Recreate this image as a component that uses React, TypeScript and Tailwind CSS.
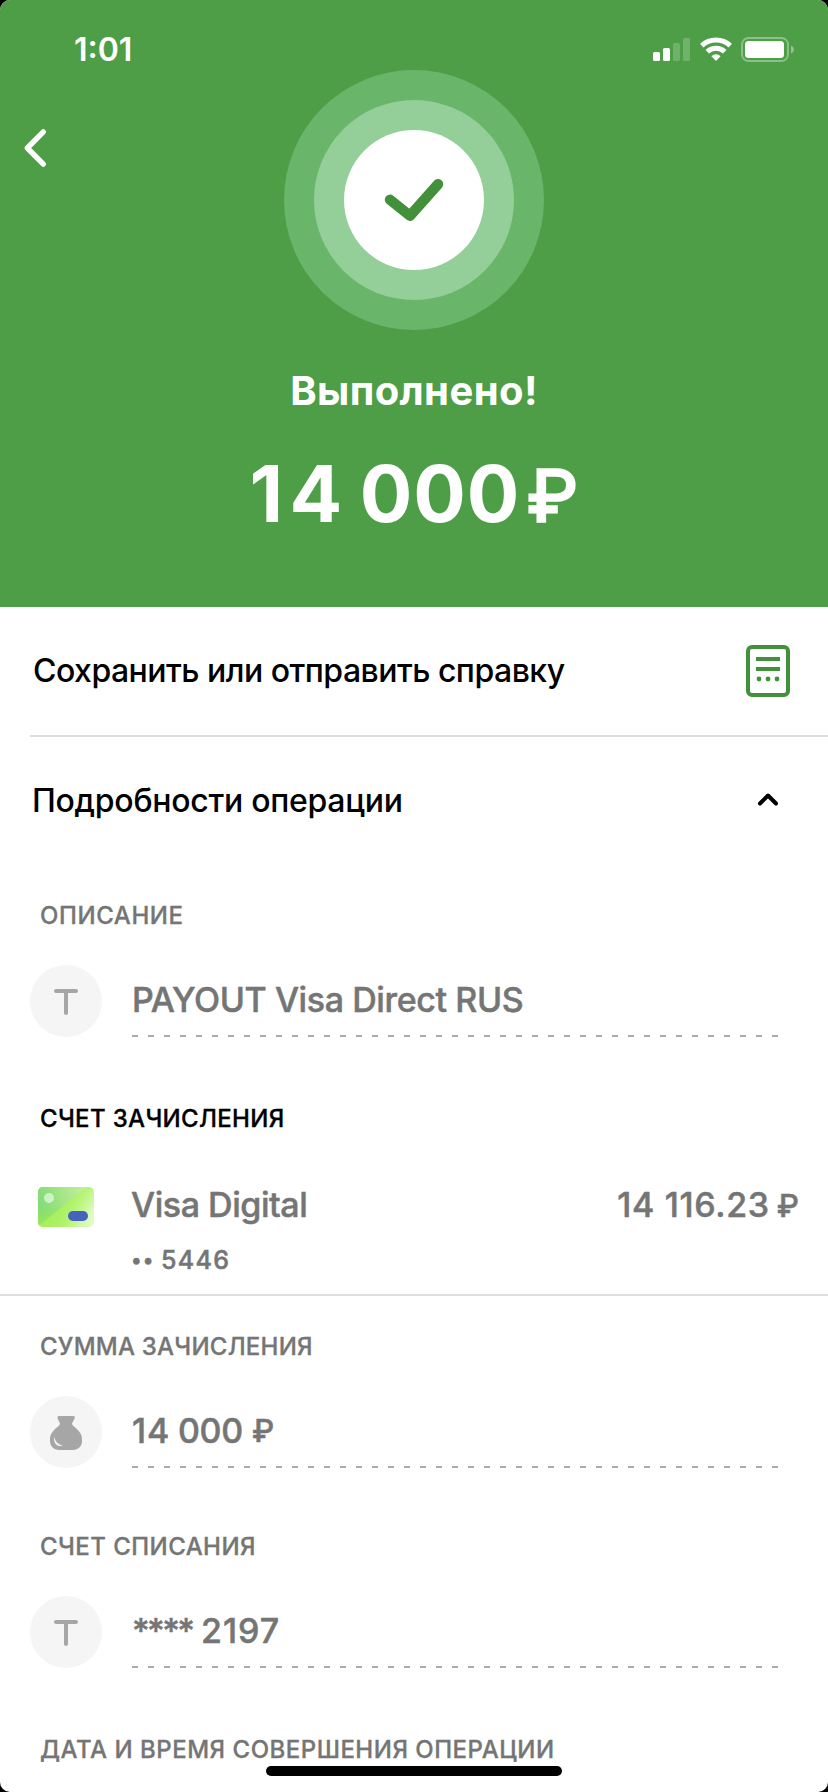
import type { ReactNode } from 'react';

function StatusBar() {
  return (
    <div className="flex h-[70px] items-start justify-between pt-[25px] pr-[34px] pl-[74px]">
      <span className="pt-px text-[32px] leading-[48px] font-semibold">1:01</span>
      <div className="flex pt-3">
        <svg width="37" height="24" viewBox="0 0 37 24" fill="white" className="mt-px">
          <rect x="0" y="14" width="7" height="9" rx="1.5" />
          <rect x="10" y="10" width="7" height="13" rx="1.5" />
          <rect x="20" y="5" width="7" height="18" rx="1.5" opacity="0.2" />
          <rect x="30" y="0" width="7" height="23" rx="1.5" opacity="0.2" />
        </svg>
        <svg width="32" height="24" viewBox="0 0 32 24" fill="none" className="ml-[9.5px]">
          <path d="M1.7 8.6A21.2 21.2 0 0 1 30.3 8.6" stroke="white" strokeWidth="5" />
          <path d="M7.3 14.8A12.7 12.7 0 0 1 24.7 14.8" stroke="white" strokeWidth="5" />
          <path d="M16 24L11.4 19.2A6.7 6.7 0 0 1 20.6 19.2Z" fill="white" />
        </svg>
        <svg width="53" height="25" viewBox="0 0 53 25" fill="none" className="ml-[9.5px]">
          <rect x="1" y="1" width="46" height="23" rx="6.5" stroke="white" strokeWidth="2" opacity="0.35" />
          <rect x="4" y="4" width="39" height="17" rx="3.5" fill="white" />
          <path d="M50 8.5Q53 9.8 53 12.5T50 16.5Z" fill="white" opacity="0.4" />
        </svg>
      </div>
    </div>
  );
}

function SuccessBadge() {
  return (
    <div className="flex size-[260px] items-center justify-center rounded-full bg-[#69b66b]">
      <div className="flex size-[200px] items-center justify-center rounded-full bg-[#94cf99]">
        <div className="flex size-[140px] items-center justify-center rounded-full bg-white">
          <svg width="60" height="44" viewBox="384 178 60 44" fill="none">
            <path
              d="M390 199.8L410 215.8L438 184.2"
              stroke="#43903b"
              strokeWidth="10.4"
              strokeLinecap="round"
              strokeLinejoin="round"
            />
          </svg>
        </div>
      </div>
    </div>
  );
}

function Header() {
  return (
    <header className="h-[607px] bg-[#4d9e46] text-white">
      <StatusBar />
      <div className="grid grid-cols-[1fr_260px_1fr]">
        <button className="h-[52px] w-[60px] pt-[52px] pl-5">
          <svg width="28" height="52" viewBox="0 0 28 52" fill="none">
            <path
              d="M23.3 9.8L7.3 26L23.3 42.2"
              stroke="white"
              strokeWidth="5.4"
              strokeLinecap="round"
              strokeLinejoin="round"
            />
          </svg>
        </button>
        <SuccessBadge />
      </div>
      <h1 className="mt-[37px] text-center text-[40px] leading-[48px] font-bold tracking-[0.4px]">Выполнено!</h1>
      <p className="mt-[31px] flex items-baseline justify-center leading-[96px]">
        <span className="text-[78px] font-bold tracking-[0.9px]">
          <span className="tracking-[6.5px] [word-spacing:-14px]">14 </span>000
        </span>
        <span className="ml-[6px] text-[73px] font-medium [-webkit-text-stroke:1.4px_white]">₽</span>
      </p>
    </header>
  );
}

function Label({ children, className }: { children: ReactNode; className: string }) {
  return (
    <h2 className={`pl-10 text-[24px] leading-[32px] font-medium [-webkit-text-stroke:0.3px] ${className}`}>
      {children}
    </h2>
  );
}

function Field({ icon, children }: { icon: ReactNode; children: ReactNode }) {
  return (
    <div className="mt-[33px] flex pl-[30px]">
      <div className="flex size-[72px] items-center justify-center rounded-full bg-[#f5f5f5]">{icon}</div>
      <div className="ml-[30px] w-[646px]">
        <div className="flex h-[70px] text-[34px] leading-[70px] font-medium whitespace-pre text-[#757575] [-webkit-text-stroke:0.5px]">
          {children}
        </div>
        <div className="h-[2px] bg-[repeating-linear-gradient(90deg,#ababab_0_6px,transparent_6px_16px)]" />
      </div>
    </div>
  );
}

function TextIcon() {
  return (
    <svg width="26" height="28" viewBox="0 0 26 28" fill="none" className="mt-[2px]">
      <path d="M3 3H23M13 3V25" stroke="#a6a6a6" strokeWidth="4" strokeLinecap="round" />
    </svg>
  );
}

function BagIcon() {
  return (
    <svg width="32" height="34" viewBox="0 0 32 34" className="mt-[2px]">
      <path
        d="M8.8 0H23.2Q25.4 .3 24.6 2.4L22 7.5Q22.2 9.3 24 10.5C29 14.5 32 18 32 23V25C32 30.5 28 34 23 34H9C4 34 0 30.5 0 25V23C0 18 3 14.5 8 10.5Q9.8 9.3 10 7.5L7.6 2.4Q6.8 .3 8.8 0Z"
        fill="#a6a6a6"
      />
      <path d="M4 20.5C3.2 26.5 7 32 13 29.4C8.5 29 5.5 26 4 20.5Z" fill="#f5f5f5" />
    </svg>
  );
}

function CardIcon() {
  return (
    <svg width="56" height="40" viewBox="0 0 56 40" className="mt-[2px]">
      <defs>
        <linearGradient id="base" x1="0" y1="30" x2="56" y2="40" gradientUnits="userSpaceOnUse">
          <stop offset="0" stopColor="#93e455" />
          <stop offset="0.5" stopColor="#b9f47a" />
          <stop offset="1" stopColor="#e6fccf" />
        </linearGradient>
        <linearGradient id="top" x1="0" y1="12" x2="48" y2="0" gradientUnits="userSpaceOnUse">
          <stop offset="0" stopColor="#82dc78" />
          <stop offset="1" stopColor="#c6f098" />
        </linearGradient>
        <linearGradient id="shine" x1="20" y1="12" x2="42" y2="36" gradientUnits="userSpaceOnUse">
          <stop offset="0" stopColor="#a9f25c" />
          <stop offset="1" stopColor="#a9f25c" stopOpacity="0" />
        </linearGradient>
        <linearGradient id="edge" x1="0" y1="18" x2="0" y2="38" gradientUnits="userSpaceOnUse">
          <stop offset="0" stopColor="#93e455" stopOpacity="0" />
          <stop offset="1" stopColor="#9ae957" />
        </linearGradient>
        <clipPath id="card">
          <rect width="56" height="40" rx="5" />
        </clipPath>
      </defs>
      <g clipPath="url(#card)">
        <rect width="56" height="40" fill="url(#base)" />
        <rect width="56" height="40" fill="url(#shine)" />
        <path d="M0 0H49L4 36L0 38Z" fill="url(#top)" />
        <path d="M0 0H49L4 36L0 38Z" fill="url(#edge)" />
      </g>
      <circle cx="11" cy="11" r="5" fill="white" opacity="0.55" />
      <rect x="30" y="24" width="20" height="10" rx="5" fill="#4562bf" />
    </svg>
  );
}

function Account() {
  return (
    <div className="flex h-[161px] border-b-2 border-[#dedede] pt-[50px] pr-[29px] pl-[38px] text-[34px] leading-10 font-medium text-[#757575] [-webkit-text-stroke:0.5px]">
      <CardIcon />
      <div className="ml-[37px]">
        <p className="tracking-[-0.45px]">Visa Digital</p>
        <p className="mt-5 flex items-baseline leading-[30px]">
          <span className="w-[30px] -translate-y-[2px] text-[20px] tracking-[1.2px]">••</span>
          <span className="text-[25px] tracking-[1.3px]">5446</span>
        </p>
      </div>
      <p className="ml-auto flex items-baseline">
        <span className="tracking-[0.65px]">14 116.23</span>
        <span className="ml-[7px] text-[31px]">₽</span>
      </p>
    </div>
  );
}

export default function App() {
  return (
    <div className="h-[1792px] w-[828px] bg-black">
      <main className="relative h-full overflow-hidden rounded-[10px] bg-white font-['Inter',sans-serif] text-black">
        <Header />

        <div className="flex h-32 items-center justify-between pr-[38px] pl-[33px]">
          <span className="text-[32px] font-medium tracking-[-0.52px]">Сохранить или отправить справку</span>
          <svg width="44" height="52" viewBox="0 0 44 52" fill="none">
            <rect x="2" y="2" width="40" height="48" rx="4" stroke="#43903b" strokeWidth="4" />
            <path d="M10 14H34M10 24H34" stroke="#43903b" strokeWidth="4" />
            <g fill="#43903b">
              <circle cx="13" cy="34" r="2.4" />
              <circle cx="22" cy="34" r="2.4" />
              <circle cx="31" cy="34" r="2.4" />
            </g>
          </svg>
        </div>
        <div className="ml-[30px] h-[2px] bg-[#dedede]" />
        <div className="flex h-32 items-center justify-between pr-[48px] pl-8">
          <span className="text-[32px] font-medium tracking-[-0.28px]">Подробности операции</span>
          <svg width="24" height="18" viewBox="0 0 24 18" fill="none" className="-translate-y-0.5">
            <path d="M4 13.5L12 5.5L20 13.5" stroke="black" strokeWidth="4" strokeLinecap="round" strokeLinejoin="round" />
          </svg>
        </div>

        <section className="mt-[35px]">
          <Label className="tracking-[0.58px] text-[#757575]">ОПИСАНИЕ</Label>
          <Field icon={<TextIcon />}>
            <span className="tracking-[-0.4px]">PAYOUT Visa Direct RUS</span>
          </Field>
        </section>

        <section className="mt-[66px]">
          <Label className="tracking-[0.33px] text-black">СЧЕТ ЗАЧИСЛЕНИЯ</Label>
          <Account />
        </section>

        <section className="mt-[35px]">
          <Label className="tracking-[0.23px] text-[#757575]">СУММА ЗАЧИСЛЕНИЯ</Label>
          <Field icon={<BagIcon />}>
            <span className="tracking-[-0.25px]">
              <span className="tracking-[0.8px] [word-spacing:-2px]">14 </span>000
            </span>
            <span className="ml-[9px] text-[31px]">₽</span>
          </Field>
        </section>

        <section className="mt-[63px]">
          <Label className="tracking-[0.44px] text-[#757575]">СЧЕТ СПИСАНИЯ</Label>
          <Field icon={<TextIcon />}>
            <span className="w-[69px] tracking-[-2.6px]">****</span>
            <span className="tracking-[1px]">2197</span>
          </Field>
        </section>

        <section className="mt-[66px]">
          <Label className="tracking-[0.5px] text-[#757575]">ДАТА И ВРЕМЯ СОВЕРШЕНИЯ ОПЕРАЦИИ</Label>
        </section>

        <div className="absolute bottom-4 left-[266px] h-[10px] w-[296px] rounded-full bg-black" />
      </main>
    </div>
  );
}
